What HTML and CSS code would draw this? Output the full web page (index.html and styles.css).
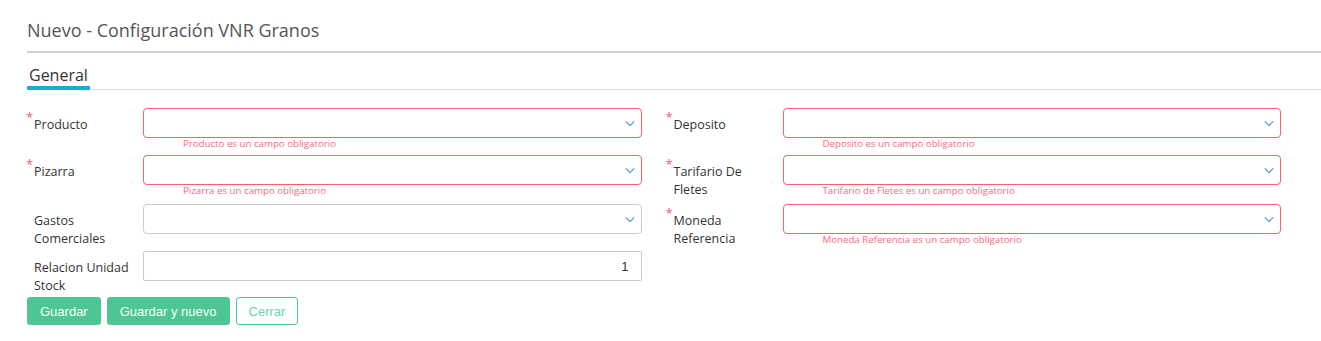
FILE: index.html
```html
<!DOCTYPE html>
<html lang="es">
<head>
  <meta charset="UTF-8">
  <title>Nuevo - Configuración VNR Granos</title>
  <link rel="stylesheet" href="styles.css">
</head>
<body>
  <div class="page">
    <h1 class="title">Nuevo - Configuración VNR Granos</h1>

    <div class="tabs">
      <span class="tab active">General</span>
    </div>

    <form class="form">
      <div class="grid">
        <div class="field">
          <label class="label required">Producto</label>
          <div class="control">
            <div class="select invalid"><svg class="chev" viewBox="0 0 12 8"><path d="M1 1.5l5 5 5-5"/></svg></div>
            <div class="error">Producto es un campo obligatorio</div>
          </div>
        </div>
        <div class="field">
          <label class="label required">Deposito</label>
          <div class="control">
            <div class="select invalid"><svg class="chev" viewBox="0 0 12 8"><path d="M1 1.5l5 5 5-5"/></svg></div>
            <div class="error">Deposito es un campo obligatorio</div>
          </div>
        </div>

        <div class="field tall">
          <label class="label required">Pizarra</label>
          <div class="control">
            <div class="select invalid"><svg class="chev" viewBox="0 0 12 8"><path d="M1 1.5l5 5 5-5"/></svg></div>
            <div class="error">Pizarra es un campo obligatorio</div>
          </div>
        </div>
        <div class="field tall">
          <label class="label required">Tarifario De Fletes</label>
          <div class="control">
            <div class="select invalid"><svg class="chev" viewBox="0 0 12 8"><path d="M1 1.5l5 5 5-5"/></svg></div>
            <div class="error">Tarifario de Fletes es un campo obligatorio</div>
          </div>
        </div>

        <div class="field">
          <label class="label">Gastos Comerciales</label>
          <div class="control">
            <div class="select"><svg class="chev" viewBox="0 0 12 8"><path d="M1 1.5l5 5 5-5"/></svg></div>
          </div>
        </div>
        <div class="field">
          <label class="label required">Moneda Referencia</label>
          <div class="control">
            <div class="select invalid"><svg class="chev" viewBox="0 0 12 8"><path d="M1 1.5l5 5 5-5"/></svg></div>
            <div class="error">Moneda Referencia es un campo obligatorio</div>
          </div>
        </div>

        <div class="field last">
          <label class="label">Relacion Unidad Stock</label>
          <div class="control">
            <input class="number" type="text" value="1">
          </div>
        </div>
      </div>

      <div class="actions">
        <button type="button" class="btn primary">Guardar</button>
        <button type="button" class="btn primary">Guardar y nuevo</button>
        <button type="button" class="btn outline">Cerrar</button>
      </div>
    </form>
  </div>
</body>
</html>
```

FILE: styles.css
```css
* {
  margin: 0;
  padding: 0;
  box-sizing: border-box;
}

body {
  background: #fff;
  font-family: 'Open Sans', sans-serif;
  color: #333;
}

.page {
  padding: 19px 0 0 27px;
}

.title {
  font-family: 'Open Sans', sans-serif;
  font-weight: 400;
  font-size: 18px;
  line-height: 22px;
  color: #555;
  padding-bottom: 10px;
  border-bottom: 2px solid #cfcfd3;
}

.tabs {
  margin-top: 12px;
  border-bottom: 1px solid #ddd;
  display: flex;
}

.tab {
  font-size: 16px;
  line-height: 20px;
  color: #333;
  padding: 0 2px 1px 2px;
  border-bottom: 4px solid #1aabd1;
  margin-bottom: -1px;
}

.form {
  padding: 18px 40px 0 0;
}

.grid {
  display: grid;
  grid-template-columns: 1fr 1fr;
  column-gap: 24px;
  margin-left: -1px;
}

.field {
  display: flex;
  align-items: flex-start;
  min-height: 47px;
}

.field.tall {
  min-height: 49px;
}

.field.last {
  min-height: 46px;
}

.label {
  width: 117px;
  flex: none;
  padding: 8px 14px 0 8px;
  font-size: 12.5px;
  line-height: 18px;
  color: #333;
  position: relative;
}

.label.required::before {
  content: "*";
  position: absolute;
  left: 0;
  top: 3px;
  color: #f0607a;
  font-size: 13px;
  line-height: 13px;
}

.control {
  flex: 1;
  min-width: 0;
}

.select {
  height: 30px;
  border: 1px solid #ccc;
  border-radius: 4px;
  background: #fff;
  display: flex;
  align-items: center;
  justify-content: flex-end;
  padding-right: 6px;
}

.select.invalid {
  border-color: #f5646e;
}

.chev {
  width: 10px;
  height: 7px;
  fill: none;
  stroke: #5b96d6;
  stroke-width: 1.5;
}

.error {
  font-size: 9.7px;
  line-height: 12px;
  padding-left: 40px;
  color: #f06c82;
}

.number {
  display: block;
  width: 100%;
  height: 30px;
  border: 1px solid #ccc;
  border-radius: 2px;
  padding: 0 12px;
  text-align: right;
  font-family: 'Liberation Sans', Arial, sans-serif;
  font-size: 13px;
  color: #333;
  outline: none;
}

.actions {
  display: flex;
  gap: 6px;
}

.btn {
  height: 28px;
  padding: 0 12px;
  border-radius: 3px;
  font-family: 'Liberation Sans', Arial, sans-serif;
  font-size: 13px;
  cursor: pointer;
}

.btn.primary {
  background: #4dc693;
  border: 1px solid #4dc693;
  color: #f4fff9;
}

.btn.outline {
  background: #fff;
  border: 1px solid #4dc693;
  color: #6cd3a8;
}
```
